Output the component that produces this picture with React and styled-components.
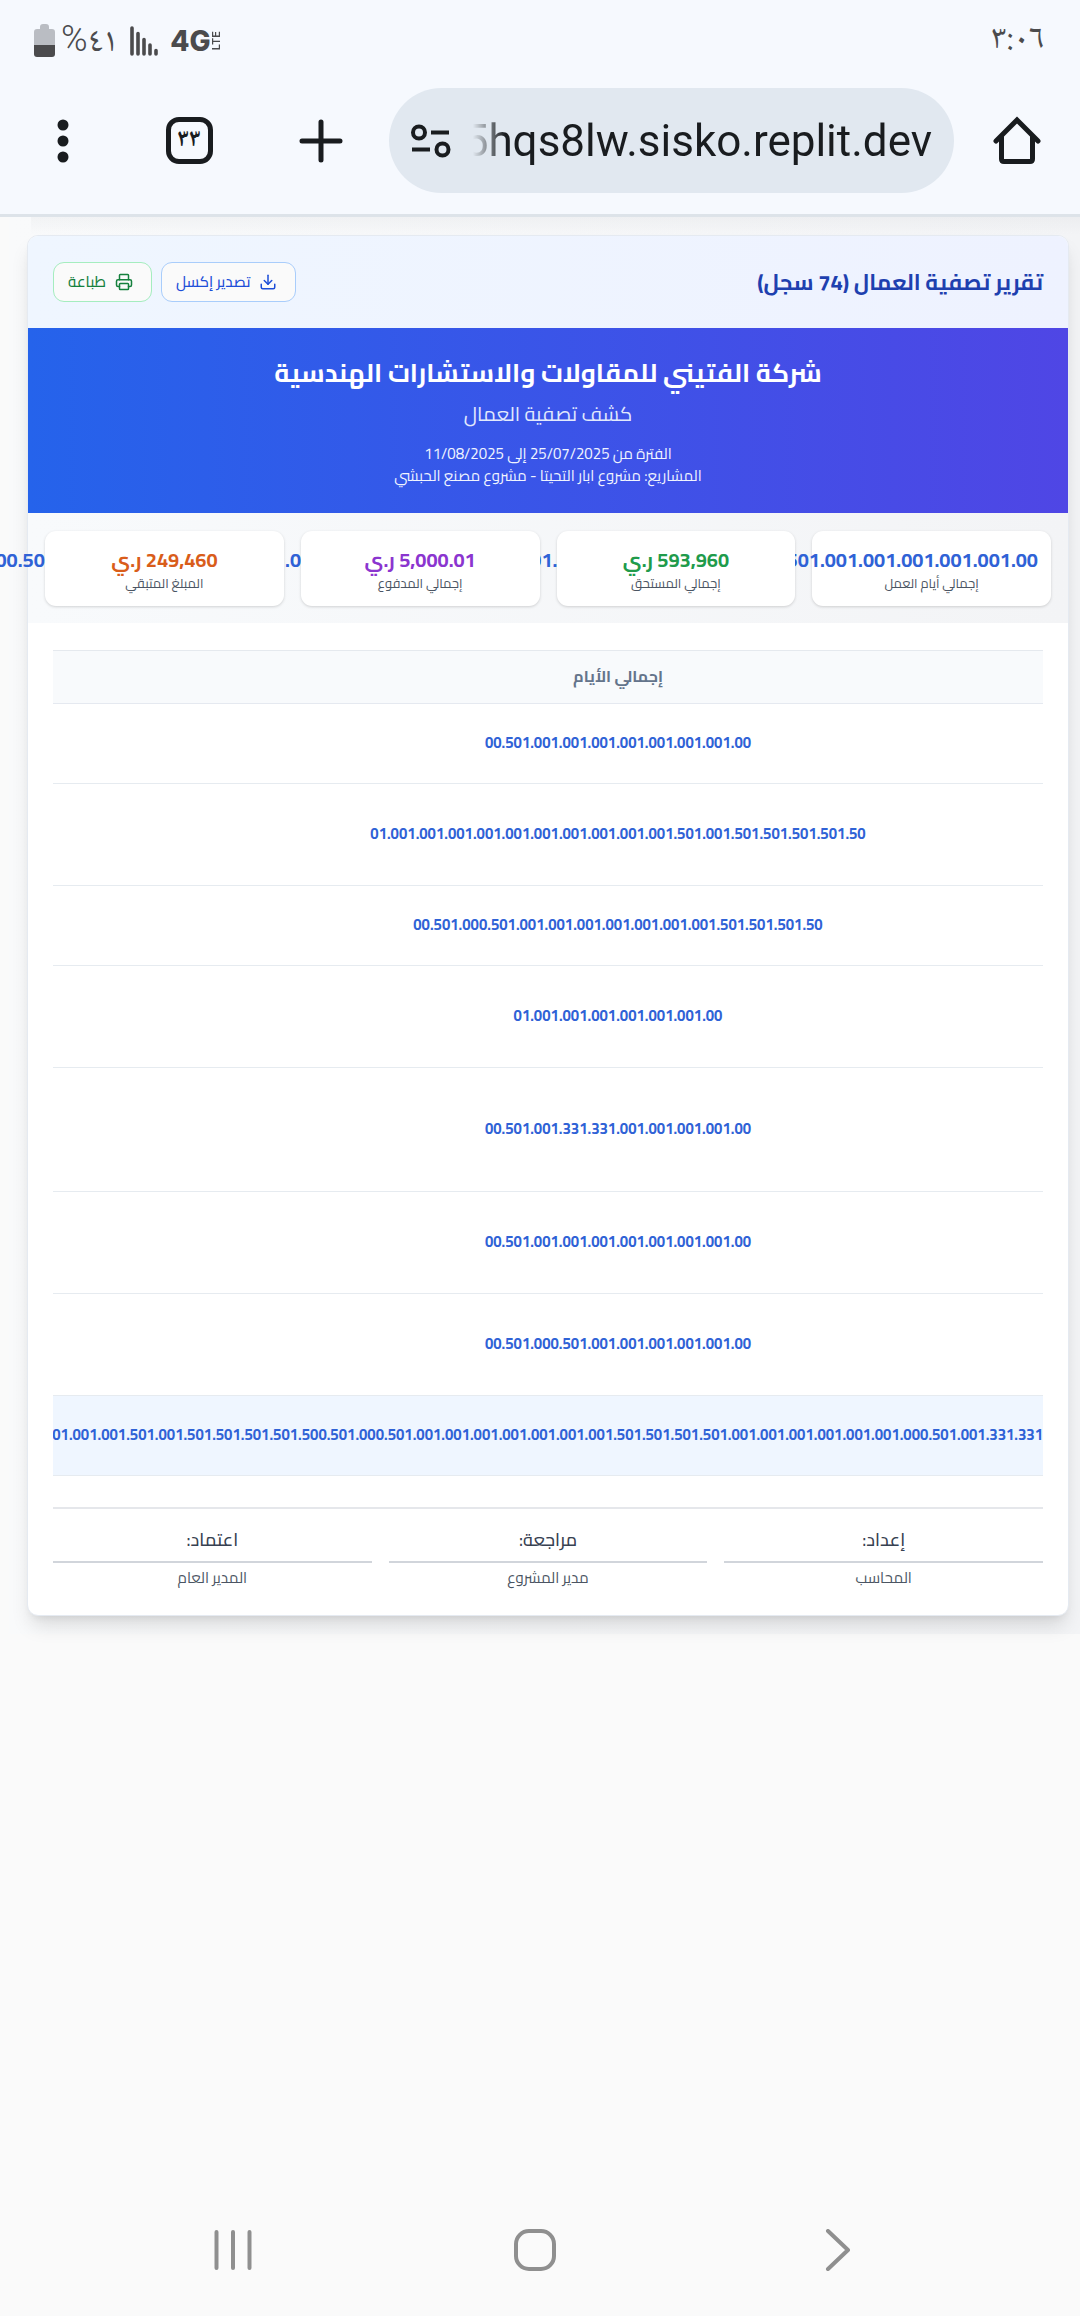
import React from "react";
import styled, { createGlobalStyle } from "styled-components";
import { Download, Printer } from "lucide-react";

const GlobalStyle = createGlobalStyle`
  *, *::before, *::after { box-sizing: border-box; }
  body { margin: 0; background: #fafafa; font-family: Cairo, "Noto Sans Arabic", "Noto Sans", sans-serif; }
  h1, h2, p { margin: 0; }
`;

const Screen = styled.div`
  display: flex;
  flex-direction: column;
  min-height: 100vh;
  overflow-x: hidden;
`;

/* ---------- browser chrome ---------- */

const Chrome = styled.header`
  background: #f6f9fe;
  border-bottom: 3px solid #dde3e9;
`;

const StatusBar = styled.div`
  display: flex;
  align-items: center;
  justify-content: space-between;
  height: 82px;
  padding: 0 36px 0 34px;
  color: #4b4b4d;
  font-family: "Noto Naskh Arabic", "Noto Sans Arabic", serif;
  font-size: 34px;
  line-height: 36px;
`;

const StatusGroup = styled.div`
  display: flex;
  align-items: center;
  gap: 12px;
`;

const Network = styled.div`
  display: flex;
  align-items: center;
  direction: ltr;
  font-family: Inter, sans-serif;
  font-weight: 800;
  font-size: 28px;
  line-height: 24px;
`;

const Lte = styled.span`
  writing-mode: vertical-rl;
  transform: rotate(180deg);
  font-size: 11px;
  line-height: 10px;
  font-weight: 600;
`;

const BatteryGroup = styled.div`
  display: flex;
  align-items: center;
  gap: 6px;
`;

const Percent = styled.span`
  font: 300 36px/36px Roboto, sans-serif;
`;

const Toolbar = styled.div`
  display: flex;
  align-items: center;
  padding: 6px 0 21px;
`;

const ToolButton = styled.button`
  display: flex;
  align-items: center;
  justify-content: center;
  flex: none;
  width: ${(p) => (p.$wide ? 137 : 126)}px;
  height: 105px;
  padding: 0;
  border: 0;
  background: none;
  color: #191c1f;
`;

const TabCount = styled.span`
  display: flex;
  align-items: center;
  justify-content: center;
  width: 47px;
  height: 47px;
  border: 5px solid #191c1f;
  border-radius: 13px;
  font: 700 24px/24px "Noto Naskh Arabic", "Noto Sans Arabic", serif;
`;

const AddressBar = styled.div`
  display: flex;
  align-items: center;
  flex: 1;
  min-width: 0;
  height: 105px;
  padding: 0 22px;
  border-radius: 53px;
  background: #e1e8f0;
  direction: ltr;
  gap: 22px;
`;

const SiteInfo = styled.button`
  display: flex;
  padding: 0;
  border: 0;
  background: none;
`;

const Url = styled.a`
  display: flex;
  justify-content: flex-end;
  flex: 1;
  min-width: 0;
  overflow: hidden;
  color: #191c1f;
  font: 400 44px/60px Roboto, sans-serif;
  text-decoration: none;
  white-space: nowrap;
  mask-image: linear-gradient(to right, transparent, #000 32px);
`;

/* ---------- report ---------- */

const Page = styled.main`
  margin-left: 9px;
  padding: 18px 11px 18px 18px;
  background:
    linear-gradient(to bottom, rgba(20, 30, 45, 0.03), transparent) right top / calc(100% - 22px) 18px no-repeat,
    linear-gradient(to right, #f9fafb, #f3f4f6);
`;

const Card = styled.article`
  border: 1px solid #e5eaf1;
  border-radius: 11px;
  background: #fff;
  box-shadow: 0 13px 20px -4px rgba(0, 0, 0, 0.13), 0 5px 8px -5px rgba(0, 0, 0, 0.1);
`;

const CardHead = styled.div`
  display: flex;
  align-items: center;
  justify-content: space-between;
  height: 92px;
  padding: 0 25px;
  border-radius: 10px 10px 0 0;
  background: linear-gradient(to right, #eff6ff, #eef2ff);
`;

const CardTitle = styled.h1`
  color: #1e40af;
  font-size: 22px;
  line-height: 32px;
  font-weight: 700;
`;

const Actions = styled.div`
  display: flex;
  gap: 9px;
`;

const tones = {
  blue: { text: "#1d4ed8", line: "#a9cdfb" },
  green: { text: "#15803d", line: "#a5edbf" },
};

const ActionButton = styled.button`
  display: flex;
  align-items: center;
  gap: 9px;
  height: 40px;
  padding: 0 18px 0 14px;
  border: 1px solid ${(p) => tones[p.$tone].line};
  border-radius: 11px;
  background: #fafafa;
  color: ${(p) => tones[p.$tone].text};
  font: 500 15px/22px Cairo, "Noto Sans Arabic", sans-serif;
`;

const Banner = styled.section`
  padding: 26px;
  background: linear-gradient(to right, #2563eb, #4f46e5);
  color: #fff;
  text-align: center;
`;

const Company = styled.h2`
  font-size: 26px;
  line-height: 37px;
  font-weight: 700;
`;

const ReportName = styled.p`
  margin: 7px 0 14px;
  color: #e2e9fd;
  font-size: 20px;
  line-height: 31px;
`;

const Meta = styled.p`
  color: #f0f4ff;
  font-size: 15px;
  line-height: 22px;
`;

const Stats = styled.section`
  display: grid;
  grid-template-columns: repeat(4, minmax(0, 1fr));
  gap: 17px;
  padding: 18px 17px 17px;
  background: linear-gradient(to right, #f8fafc, #f3f4f6);
`;

const Stat = styled.div`
  position: relative;
  padding: 13px 13px 14px;
  border-radius: 11px;
  background: #fff;
  box-shadow: 0 1px 3px rgba(0, 0, 0, 0.16);
  text-align: center;
`;

const StatValue = styled.p`
  color: ${(p) => p.$color};
  font-size: 20px;
  line-height: 31px;
  font-weight: 700;
  white-space: nowrap;
`;

const StatLabel = styled.p`
  color: #4b5563;
  font-size: 13px;
  line-height: 17px;
`;

const TableWrap = styled.div`
  margin: 27px 25px 0;
  overflow: hidden;
`;

const Table = styled.table`
  width: 100%;
  table-layout: fixed;
  border-collapse: separate;
  border-spacing: 0;
  border-top: 1px solid #e5e9ee;
`;

const HeadCell = styled.th`
  height: 53px;
  padding: 0 0 2px 140px;
  border-bottom: 1px solid #e5e9f0;
  background: #f8fafc;
  color: #64748b;
  font-size: 16px;
  line-height: 22px;
  font-weight: 700;
`;

const DaysCell = styled.td`
  height: ${(p) => 58 + 22 * p.$lines}px;
  padding: 0 0 2px 140px;
  border-bottom: 1px solid #e6ebf0;
  color: #2f62d6;
  font-size: 15px;
  line-height: 22px;
  font-weight: 700;
  text-align: center;
  white-space: nowrap;
`;

const TotalCell = styled(DaysCell)`
  padding: 0 0 2px;
  background: #eff6ff;
  text-align: start;
`;

const Signatures = styled.footer`
  display: grid;
  grid-template-columns: repeat(3, minmax(0, 1fr));
  gap: 17px;
  margin: 31px 25px 0;
  padding: 18px 0 26px;
  border-top: 2px solid #e5e7eb;
  text-align: center;
`;

const Role = styled.p`
  padding-bottom: 8px;
  border-bottom: 2px solid #d1d5db;
  color: #374151;
  font-size: 18px;
  line-height: 26px;
  font-weight: 500;
`;

const Signer = styled.p`
  margin-top: 4px;
  color: #4b5563;
  font-size: 15px;
  line-height: 22px;
`;

/* ---------- system navigation ---------- */

const SystemNav = styled.nav`
  display: flex;
  align-items: center;
  justify-content: space-between;
  height: 132px;
  margin-top: auto;
  padding: 0 229px 0 213px;
  direction: ltr;
`;

const NavButton = styled.button`
  display: flex;
  padding: 0;
  border: 0;
  background: none;
  color: #8f8f8f;
`;

const allDays =
  "01.000.501" + ".001".repeat(19) + ".501" + ".001".repeat(5) + ".00";

const stats = [
  { label: "إجمالي أيام العمل", value: allDays, color: "#2f62d6" },
  { label: "إجمالي المستحق", value: "593,960 ر.ي", color: "#209b4b" },
  { label: "إجمالي المدفوع", value: "5,000.01 ر.ي", color: "#8b35cf" },
  { label: "المبلغ المتبقي", value: "249,460 ر.ي", color: "#d95d1a" },
];

const rows = [
  { days: "00.501.001.001.001.001.001.001.001.00", lines: 1 },
  { days: "01.001.001.001.001.001.001.001.001.001.001.501.001.501.501.501.501.50", lines: 2 },
  { days: "00.501.000.501.001.001.001.001.001.001.001.501.501.501.50", lines: 1 },
  { days: "01.001.001.001.001.001.001.00", lines: 2 },
  { days: "00.501.001.331.331.001.001.001.001.00", lines: 3 },
  { days: "00.501.001.001.001.001.001.001.001.00", lines: 2 },
  { days: "00.501.000.501.001.001.001.001.001.00", lines: 2 },
];

const totalDays =
  "001.001.001.501.001.501.501.501.501.500.501.000.501.001.001.001.001.001.001.001.501.501.501.501.001.001.001.001.001.001.000.501.001.331.331";

const signatures = [
  { role: "إعداد:", name: "المحاسب" },
  { role: "مراجعة:", name: "مدير المشروع" },
  { role: "اعتماد:", name: "المدير العام" },
];

const HomeIcon = () => (
  <svg width="50" height="50" viewBox="0 0 50 50" fill="none" stroke="currentColor" strokeWidth="5" strokeLinecap="round" strokeLinejoin="round">
    <path d="M4 25 25 4l21 21" strokeLinejoin="miter" />
    <path d="M9.500 21v22q0 2.500 2.500 2.500h26q2.500 0 2.500-2.500V21" />
  </svg>
);

const PlusIcon = () => (
  <svg width="44" height="44" viewBox="0 0 44 44" stroke="currentColor" strokeWidth="5" strokeLinecap="round">
    <path d="M22 3v38M3 22h38" />
  </svg>
);

const MenuIcon = () => (
  <svg width="12" height="44" viewBox="0 0 12 44" fill="currentColor">
    <circle cx="6" cy="6" r="5.500" />
    <circle cx="6" cy="22" r="5.500" />
    <circle cx="6" cy="38" r="5.500" />
  </svg>
);

const TuneIcon = () => (
  <svg width="40" height="34" viewBox="0 0 40 34" fill="none" stroke="#191c1f" strokeWidth="4">
    <circle cx="8" cy="8.500" r="6" />
    <path d="M20 8.500h18M1 25.500h18" />
    <circle cx="31.500" cy="25.500" r="6" />
  </svg>
);

const SignalIcon = () => (
  <svg width="28" height="30" viewBox="0 0 28 30" stroke="#4b4b4d" strokeWidth="3.600" strokeLinecap="round">
    <path d="M2 2v26M8 7.500V28M14 13.500V28M20 19v9M26 24.500V28" />
  </svg>
);

const BatteryIcon = () => (
  <svg width="21" height="34" viewBox="0 0 21 34">
    <path d="M6 3q0-3 3-3h3q3 0 3 3v2h3q3 0 3 3v13H0V8q0-3 3-3h3z" fill="#babdc3" />
    <path d="M0 21h21v9q0 3-3 3H3q-3 0-3-3z" fill="#4b4b4d" />
  </svg>
);

export default function App() {
  return (
    <Screen dir="rtl" lang="ar">
      <GlobalStyle />
      <Chrome>
        <StatusBar>
          <span>٣:٠٦</span>
          <StatusGroup>
            <Network>
              4G<Lte>LTE</Lte>
            </Network>
            <SignalIcon />
            <BatteryGroup>
              <span>٤١<Percent>%</Percent></span>
              <BatteryIcon />
            </BatteryGroup>
          </StatusGroup>
        </StatusBar>
        <Toolbar>
          <ToolButton aria-label="الصفحة الرئيسية"><HomeIcon /></ToolButton>
          <AddressBar>
            <SiteInfo aria-label="معلومات الموقع"><TuneIcon /></SiteInfo>
            <Url href="#">5hqs8lw.sisko.replit.dev</Url>
          </AddressBar>
          <ToolButton $wide aria-label="علامة تبويب جديدة"><PlusIcon /></ToolButton>
          <ToolButton aria-label="علامات التبويب"><TabCount>٣٣</TabCount></ToolButton>
          <ToolButton aria-label="القائمة"><MenuIcon /></ToolButton>
        </Toolbar>
      </Chrome>

      <Page>
        <Card>
          <CardHead>
            <CardTitle>تقرير تصفية العمال (74 سجل)</CardTitle>
            <Actions>
              <ActionButton $tone="blue"><Download size={18} />تصدير إكسل</ActionButton>
              <ActionButton $tone="green"><Printer size={18} />طباعة</ActionButton>
            </Actions>
          </CardHead>
          <Banner>
            <Company>شركة الفتيني للمقاولات والاستشارات الهندسية</Company>
            <ReportName>كشف تصفية العمال</ReportName>
            <Meta>الفترة من 25/07/2025 إلى 11/08/2025</Meta>
            <Meta>المشاريع: مشروع ابار التحيتا - مشروع مصنع الحبشي</Meta>
          </Banner>
          <Stats>
            {stats.map((s) => (
              <Stat key={s.label}>
                <StatValue $color={s.color}>{s.value}</StatValue>
                <StatLabel>{s.label}</StatLabel>
              </Stat>
            ))}
          </Stats>
          <TableWrap>
            <Table>
              <thead>
                <tr><HeadCell scope="col">إجمالي الأيام</HeadCell></tr>
              </thead>
              <tbody>
                {rows.map((r, i) => (
                  <tr key={i}><DaysCell $lines={r.lines}>{r.days}</DaysCell></tr>
                ))}
              </tbody>
              <tfoot>
                <tr><TotalCell $lines={1}>{totalDays}</TotalCell></tr>
              </tfoot>
            </Table>
          </TableWrap>
          <Signatures>
            {signatures.map((s) => (
              <div key={s.role}>
                <Role>{s.role}</Role>
                <Signer>{s.name}</Signer>
              </div>
            ))}
          </Signatures>
        </Card>
      </Page>

      <SystemNav>
        <NavButton aria-label="التطبيقات الأخيرة">
          <svg width="40" height="42" viewBox="0 0 40 42" stroke="currentColor" strokeWidth="4" strokeLinecap="round">
            <path d="M3.500 3v36M20 3v36M36.500 3v36" />
          </svg>
        </NavButton>
        <NavButton aria-label="الشاشة الرئيسية">
          <svg width="42" height="42" viewBox="0 0 42 42" fill="none" stroke="currentColor" strokeWidth="4">
            <rect x="2" y="2" width="38" height="38" rx="13" />
          </svg>
        </NavButton>
        <NavButton aria-label="رجوع">
          <svg width="34" height="42" viewBox="0 0 34 42" fill="none" stroke="currentColor" strokeWidth="4" strokeLinecap="round" strokeLinejoin="round">
            <path d="M11 2 31 21 11 40" />
          </svg>
        </NavButton>
      </SystemNav>
    </Screen>
  );
}
